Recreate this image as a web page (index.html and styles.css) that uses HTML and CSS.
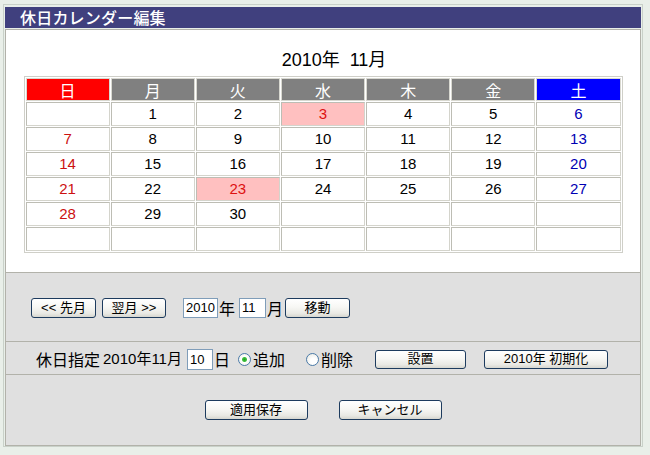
FILE: index.html
```html
<!DOCTYPE html>
<html lang="ja">
<head>
<meta charset="utf-8">
<title>休日カレンダー編集</title>
<link rel="stylesheet" href="styles.css">
</head>
<body>
<div class="frame">
  <div class="titlebar">休日カレンダー編集</div>

  <div class="section cal">
    <div class="month">2010年&nbsp;&nbsp;11月</div>
    <table class="calendar">
      <thead>
        <tr>
          <th class="h-sun">日</th>
          <th class="h-wk">月</th>
          <th class="h-wk">火</th>
          <th class="h-wk">水</th>
          <th class="h-wk">木</th>
          <th class="h-wk">金</th>
          <th class="h-sat">土</th>
        </tr>
      </thead>
      <tbody>
        <tr><td></td><td>1</td><td>2</td><td class="hol">3</td><td>4</td><td>5</td><td class="sat">6</td></tr>
        <tr><td class="sun">7</td><td>8</td><td>9</td><td>10</td><td>11</td><td>12</td><td class="sat">13</td></tr>
        <tr><td class="sun">14</td><td>15</td><td>16</td><td>17</td><td>18</td><td>19</td><td class="sat">20</td></tr>
        <tr><td class="sun">21</td><td>22</td><td class="hol">23</td><td>24</td><td>25</td><td>26</td><td class="sat">27</td></tr>
        <tr><td class="sun">28</td><td>29</td><td>30</td><td></td><td></td><td></td><td></td></tr>
        <tr><td></td><td></td><td></td><td></td><td></td><td></td><td></td></tr>
      </tbody>
    </table>
  </div>

  <div class="section nav">
    <button class="btn btn-prev">&lt;&lt; 先月</button>
    <button class="btn btn-next">翌月 &gt;&gt;</button>
    <input class="field f-year" type="text" value="2010">
    <span class="lbl">年</span>
    <input class="field f-month" type="text" value="11">
    <span class="lbl">月</span>
    <button class="btn btn-move">移動</button>
  </div>

  <div class="section holiday">
    <span class="lbl big">休日指定</span>
    <span class="lbl mid">2010年11月</span>
    <input class="field f-day" type="text" value="10">
    <span class="lbl">日</span>
    <label class="radio-item r-add"><input type="radio" name="mode" checked><span class="lbl">追加</span></label>
    <label class="radio-item r-del"><input type="radio" name="mode"><span class="lbl">削除</span></label>
    <button class="btn btn-set">設置</button>
    <button class="btn btn-init">2010年 初期化</button>
  </div>

  <div class="section save">
    <button class="btn btn-wide">適用保存</button>
    <button class="btn btn-wide">キャンセル</button>
  </div>
</div>
</body>
</html>
```

FILE: styles.css
```css
html, body {
  margin: 0;
  padding: 0;
  background: #e9efe9;
  font-family: "Liberation Sans", "Noto Sans CJK JP", sans-serif;
  color: #000;
}

.frame {
  margin: 4px 0 0 3px;
  width: 636px;
  border: 1px solid #c9d1c9;
  padding: 2px 1px 0 1px;
}

.titlebar {
  height: 21px;
  line-height: 21px;
  background: #40407e;
  color: #fff;
  font-family: "Noto Sans CJK JP", sans-serif;
  font-weight: 500;
  font-size: 16px;
  padding-left: 15px;
  margin-bottom: 1px;
  letter-spacing: 0.2px;
}

.section {
  border: 1px solid #b2b2aa;
  border-bottom: none;
  background: #e0e0e0;
}
.section.save {
  border-bottom: 1px solid #b2b2aa;
}

.cal {
  background: #fff;
  height: 243px;
  padding-top: 20px;
  box-sizing: border-box;
}

.month {
  text-align: center;
  font-size: 18px;
  line-height: 20px;
  height: 20px;
  margin-bottom: 6px;
  padding-left: 22px;
}

.calendar {
  width: 599px;
  margin: 0 auto;
  table-layout: fixed;
  border-collapse: separate;
  border-spacing: 1px;
  border: 1px solid #cfcfc8;
}

.calendar th {
  height: 23px;
  padding: 0;
  box-sizing: border-box;
  border: 1px solid #d8d8d0;
  color: #fff;
  font-weight: normal;
  font-size: 16px;
  font-family: "Noto Sans CJK JP", sans-serif;
  line-height: 20px;
  text-align: center;
}
.h-sun { background: #ff0000; }
.h-wk { background: #808080; }
.h-sat { background: #0000ff; }

.calendar td {
  height: 24px;
  padding: 0;
  box-sizing: border-box;
  border: 1px solid #bdbdb4;
  border-right-color: #d4d4cc;
  border-bottom-color: #d4d4cc;
  text-align: center;
  font-size: 15px;
  line-height: 20px;
  color: #000;
}
.calendar td.sun { color: #cc1111; }
.calendar td.sat { color: #0000b4; }
.calendar td.hol { background: #ffc0c0; color: #dd1111; }

.nav {
  height: 69px;
  box-sizing: border-box;
  display: flex;
  align-items: center;
  padding-left: 25px;
  padding-top: 1px;
}

.holiday {
  height: 33px;
  box-sizing: border-box;
  display: flex;
  align-items: center;
  padding-left: 30px;
  padding-top: 2px;
}

.save {
  height: 72px;
  box-sizing: border-box;
  display: flex;
  align-items: center;
  justify-content: center;
  gap: 31px;
}

.btn {
  height: 20px;
  box-sizing: border-box;
  border: 1px solid #1d3b5e;
  border-radius: 3px;
  background: linear-gradient(to bottom, #ffffff 0%, #f7f7f4 45%, #e9e9e4 80%, #d6d6cf 100%);
  font-family: "Liberation Sans", "Noto Sans CJK JP", sans-serif;
  font-size: 13px;
  line-height: 16px;
  padding: 0;
  color: #000;
}

.btn-prev { width: 65px; }
.btn-next { width: 64px; margin-left: 6px; }
.btn-move { width: 65px; margin-left: 2px; }
.btn-set { width: 91px; height: 19px; margin-left: 22px; }
.btn-init { width: 124px; height: 19px; margin-left: 18px; }
.btn-wide { width: 103px; }

.field {
  box-sizing: border-box;
  height: 20px;
  border: 1px solid #7f9db9;
  background: #fff;
  font-family: "Liberation Sans", sans-serif;
  font-size: 13px;
  padding: 0 2px;
  margin: 0;
  color: #000;
}
.f-year { width: 35px; margin-left: 17px; }
.f-month { width: 27px; margin-left: 4px; }
.f-day { width: 26px; height: 21px; margin-left: 5px; }

.lbl {
  font-family: "Noto Sans CJK JP", sans-serif;
  font-size: 16px;
  line-height: 20px;
  margin-left: 1px;
}
.lbl.big { font-size: 16px; margin-left: 0; }
.lbl.mid {
  font-family: "Liberation Sans", "Noto Sans CJK JP", sans-serif;
  font-size: 15px;
  margin-left: 3px;
}

.radio-item {
  display: flex;
  align-items: center;
}
.r-add { margin-left: 8px; }
.r-del { margin-left: 21px; }

.radio-item input {
  appearance: none;
  -webkit-appearance: none;
  width: 13px;
  height: 13px;
  margin: 0 1px 0 0;
  border: 1px solid #4a7aa8;
  border-radius: 50%;
  box-sizing: border-box;
  background: radial-gradient(circle at 60% 65%, #ffffff 30%, #e4e4dc 100%);
}
.radio-item input:checked {
  background: radial-gradient(circle, #21a121 0, #3fc03f 2px, #ffffff 3px, #ececE4 100%);
}
```
